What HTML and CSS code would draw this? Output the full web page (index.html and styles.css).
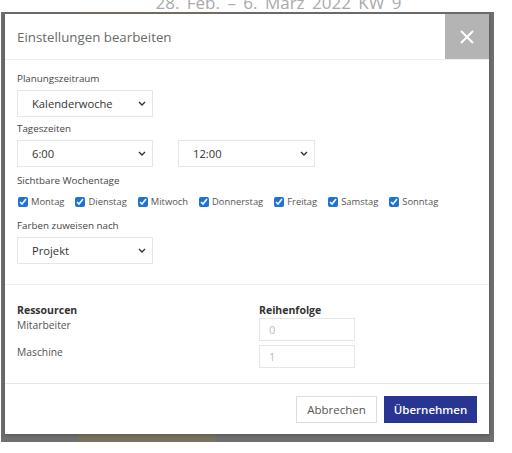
FILE: index.html
```html
<!DOCTYPE html>
<html lang="de">
<head>
    <meta charset="UTF-8">
    <meta name="viewport" content="width=device-width, initial-scale=1.0">
    <title>Einstellungen bearbeiten</title>
    <link rel="stylesheet" href="styles.css">
</head>
<body>
    <div class="page">
        <div class="calendar-title">
            <div class="calendar-title-text">28. Feb. – 6. März 2022 KW 9</div>
        </div>
        <div class="backdrop">
            <div class="modal">
                <div class="modal-header">
                    <h2>Einstellungen bearbeiten</h2>
                    <button class="close-button" aria-label="Schließen">
                        <svg width="14" height="14" viewBox="0 0 14 14">
                            <path d="M1 1 L13 13 M13 1 L1 13" stroke="#fff" stroke-width="2" fill="none"/>
                        </svg>
                    </button>
                </div>

                <div class="modal-body">
                    <label class="field-label" for="zeitraum">Planungszeitraum</label>
                    <div class="select-wrap gap-small">
                        <select id="zeitraum">
                            <option>Kalenderwoche</option>
                        </select>
                        <svg class="chevron" width="8" height="5" viewBox="0 0 8 5"><path d="M1 1 L4 4 L7 1" stroke="#333" stroke-width="1.4" fill="none"/></svg>
                    </div>

                    <label class="field-label" for="von">Tageszeiten</label>
                    <div class="time-row">
                        <div class="select-wrap">
                            <select id="von">
                                <option>6:00</option>
                            </select>
                            <svg class="chevron" width="8" height="5" viewBox="0 0 8 5"><path d="M1 1 L4 4 L7 1" stroke="#333" stroke-width="1.4" fill="none"/></svg>
                        </div>
                        <div class="select-wrap wide">
                            <select id="bis">
                                <option>12:00</option>
                            </select>
                            <svg class="chevron" width="8" height="5" viewBox="0 0 8 5"><path d="M1 1 L4 4 L7 1" stroke="#333" stroke-width="1.4" fill="none"/></svg>
                        </div>
                    </div>

                    <div class="field-label label-days">Sichtbare Wochentage</div>
                    <div class="days">
                        <label class="day"><input type="checkbox" checked>Montag</label>
                        <label class="day"><input type="checkbox" checked>Dienstag</label>
                        <label class="day"><input type="checkbox" checked>Mitwoch</label>
                        <label class="day"><input type="checkbox" checked>Donnerstag</label>
                        <label class="day"><input type="checkbox" checked>Freitag</label>
                        <label class="day"><input type="checkbox" checked>Samstag</label>
                        <label class="day"><input type="checkbox" checked>Sonntag</label>
                    </div>

                    <label class="field-label" for="farben">Farben zuweisen nach</label>
                    <div class="select-wrap">
                        <select id="farben">
                            <option>Projekt</option>
                        </select>
                        <svg class="chevron" width="8" height="5" viewBox="0 0 8 5"><path d="M1 1 L4 4 L7 1" stroke="#333" stroke-width="1.4" fill="none"/></svg>
                    </div>
                </div>

                <div class="modal-section">
                    <div class="resource-grid">
                        <div class="col-head">Ressourcen</div>
                        <div class="col-head">Reihenfolge</div>
                        <div class="resource-name">Mitarbeiter</div>
                        <input class="order-input" type="text" value="0">
                        <div class="resource-name">Maschine</div>
                        <input class="order-input" type="text" value="1">
                    </div>
                </div>

                <div class="modal-footer">
                    <button class="btn btn-cancel">Abbrechen</button>
                    <button class="btn btn-primary">Übernehmen</button>
                </div>
            </div>
        </div>
    </div>
</body>
</html>
```

FILE: styles.css
```css
body {
    margin: 0;
    font-family: "Open Sans", "Noto Sans", sans-serif;
    background-color: #fff;
    color: #444;
}

.page {
    padding-left: 1px;
}

/* calendar heading behind the overlay, only its lower half shows */
.calendar-title {
    height: 12px;
    overflow: hidden;
    padding-left: 44px;
    text-align: center;
}

.calendar-title-text {
    margin-top: -8px;
    font-size: 17px;
    line-height: 22px;
    color: #aaa;
    word-spacing: 3px;
}

.backdrop {
    width: 484px;
    padding: 2px 5px 8px 4px;
    background: linear-gradient(to right, #6f6f6f 77px, #78735f 77px 215px, #6f6f6f 215px);
}

.modal {
    background: white;
    box-shadow: 0 1px 4px rgba(0, 0, 0, 0.25);
}

.modal-header {
    display: flex;
    justify-content: space-between;
    align-items: center;
    height: 45px;
    border-bottom: 1px solid #eee;
}

.modal-header h2 {
    margin: 0;
    padding-left: 12px;
    font-size: 13.3px;
    font-weight: 400;
    color: #6a6a6a;
}

.close-button {
    width: 44px;
    height: 45px;
    border: none;
    background-color: #b4b4b4;
    display: flex;
    justify-content: center;
    align-items: center;
    padding: 0;
    cursor: pointer;
}

.modal-body {
    padding: 11px 12px 20px;
    border-bottom: 1px solid #eee;
}

.field-label {
    display: block;
    font-size: 9.8px;
    line-height: 15px;
    color: #444;
    margin-bottom: 4px;
}

.select-wrap {
    position: relative;
    width: 136px;
    height: 27px;
}

.select-wrap.wide {
    width: 137px;
}

.select-wrap select {
    appearance: none;
    -webkit-appearance: none;
    width: 100%;
    height: 100%;
    border: 1px solid #e6e6e6;
    border-radius: 0;
    background: white;
    padding: 0 20px 0 14px;
    font-family: "Open Sans", "Noto Sans", sans-serif;
    font-size: 11.2px;
    color: #333;
}

.select-wrap .chevron {
    position: absolute;
    right: 7px;
    top: 11px;
    pointer-events: none;
}

.gap-small {
    margin-bottom: 4px;
}

.time-row {
    display: flex;
    gap: 25px;
    margin-bottom: 6px;
}

.label-days {
    margin-bottom: 6px;
}

.days {
    display: flex;
    gap: 10px;
    margin-bottom: 9px;
    line-height: 15px;
}

.day {
    display: flex;
    align-items: center;
    font-size: 9.4px;
    color: #555;
}

.day input {
    width: 10px;
    height: 10px;
    margin: 0 3px 0 1px;
    accent-color: #1d72d8;
}

.modal-section {
    padding: 18px 12px 15px;
    border-bottom: 1px solid #e6e6e6;
}

.resource-grid {
    display: grid;
    grid-template-columns: 242px 96px;
    row-gap: 4px;
    align-items: start;
}

.col-head {
    font-size: 10.5px;
    font-weight: 700;
    line-height: 15px;
    color: #333;
    margin-bottom: -4px;
}

.resource-name {
    font-size: 10.3px;
    line-height: 15px;
    color: #555;
}

.order-input {
    box-sizing: border-box;
    width: 96px;
    height: 23px;
    border: 1px solid #e6e6e6;
    padding: 0 0 0 9px;
    font-family: "Open Sans", "Noto Sans", sans-serif;
    font-size: 11px;
    color: #bbb;
}

.modal-footer {
    display: flex;
    justify-content: flex-end;
    gap: 7px;
    padding: 12px 12px 11px;
}

.btn {
    height: 27px;
    font-family: "Open Sans", "Noto Sans", sans-serif;
    font-size: 11.5px;
    cursor: pointer;
}

.btn-cancel {
    width: 81px;
    border: 1px solid #ddd;
    background: white;
    color: #555;
}

.btn-primary {
    width: 93px;
    border: none;
    background-color: #283593;
    color: #fff;
    font-weight: 600;
}
```
